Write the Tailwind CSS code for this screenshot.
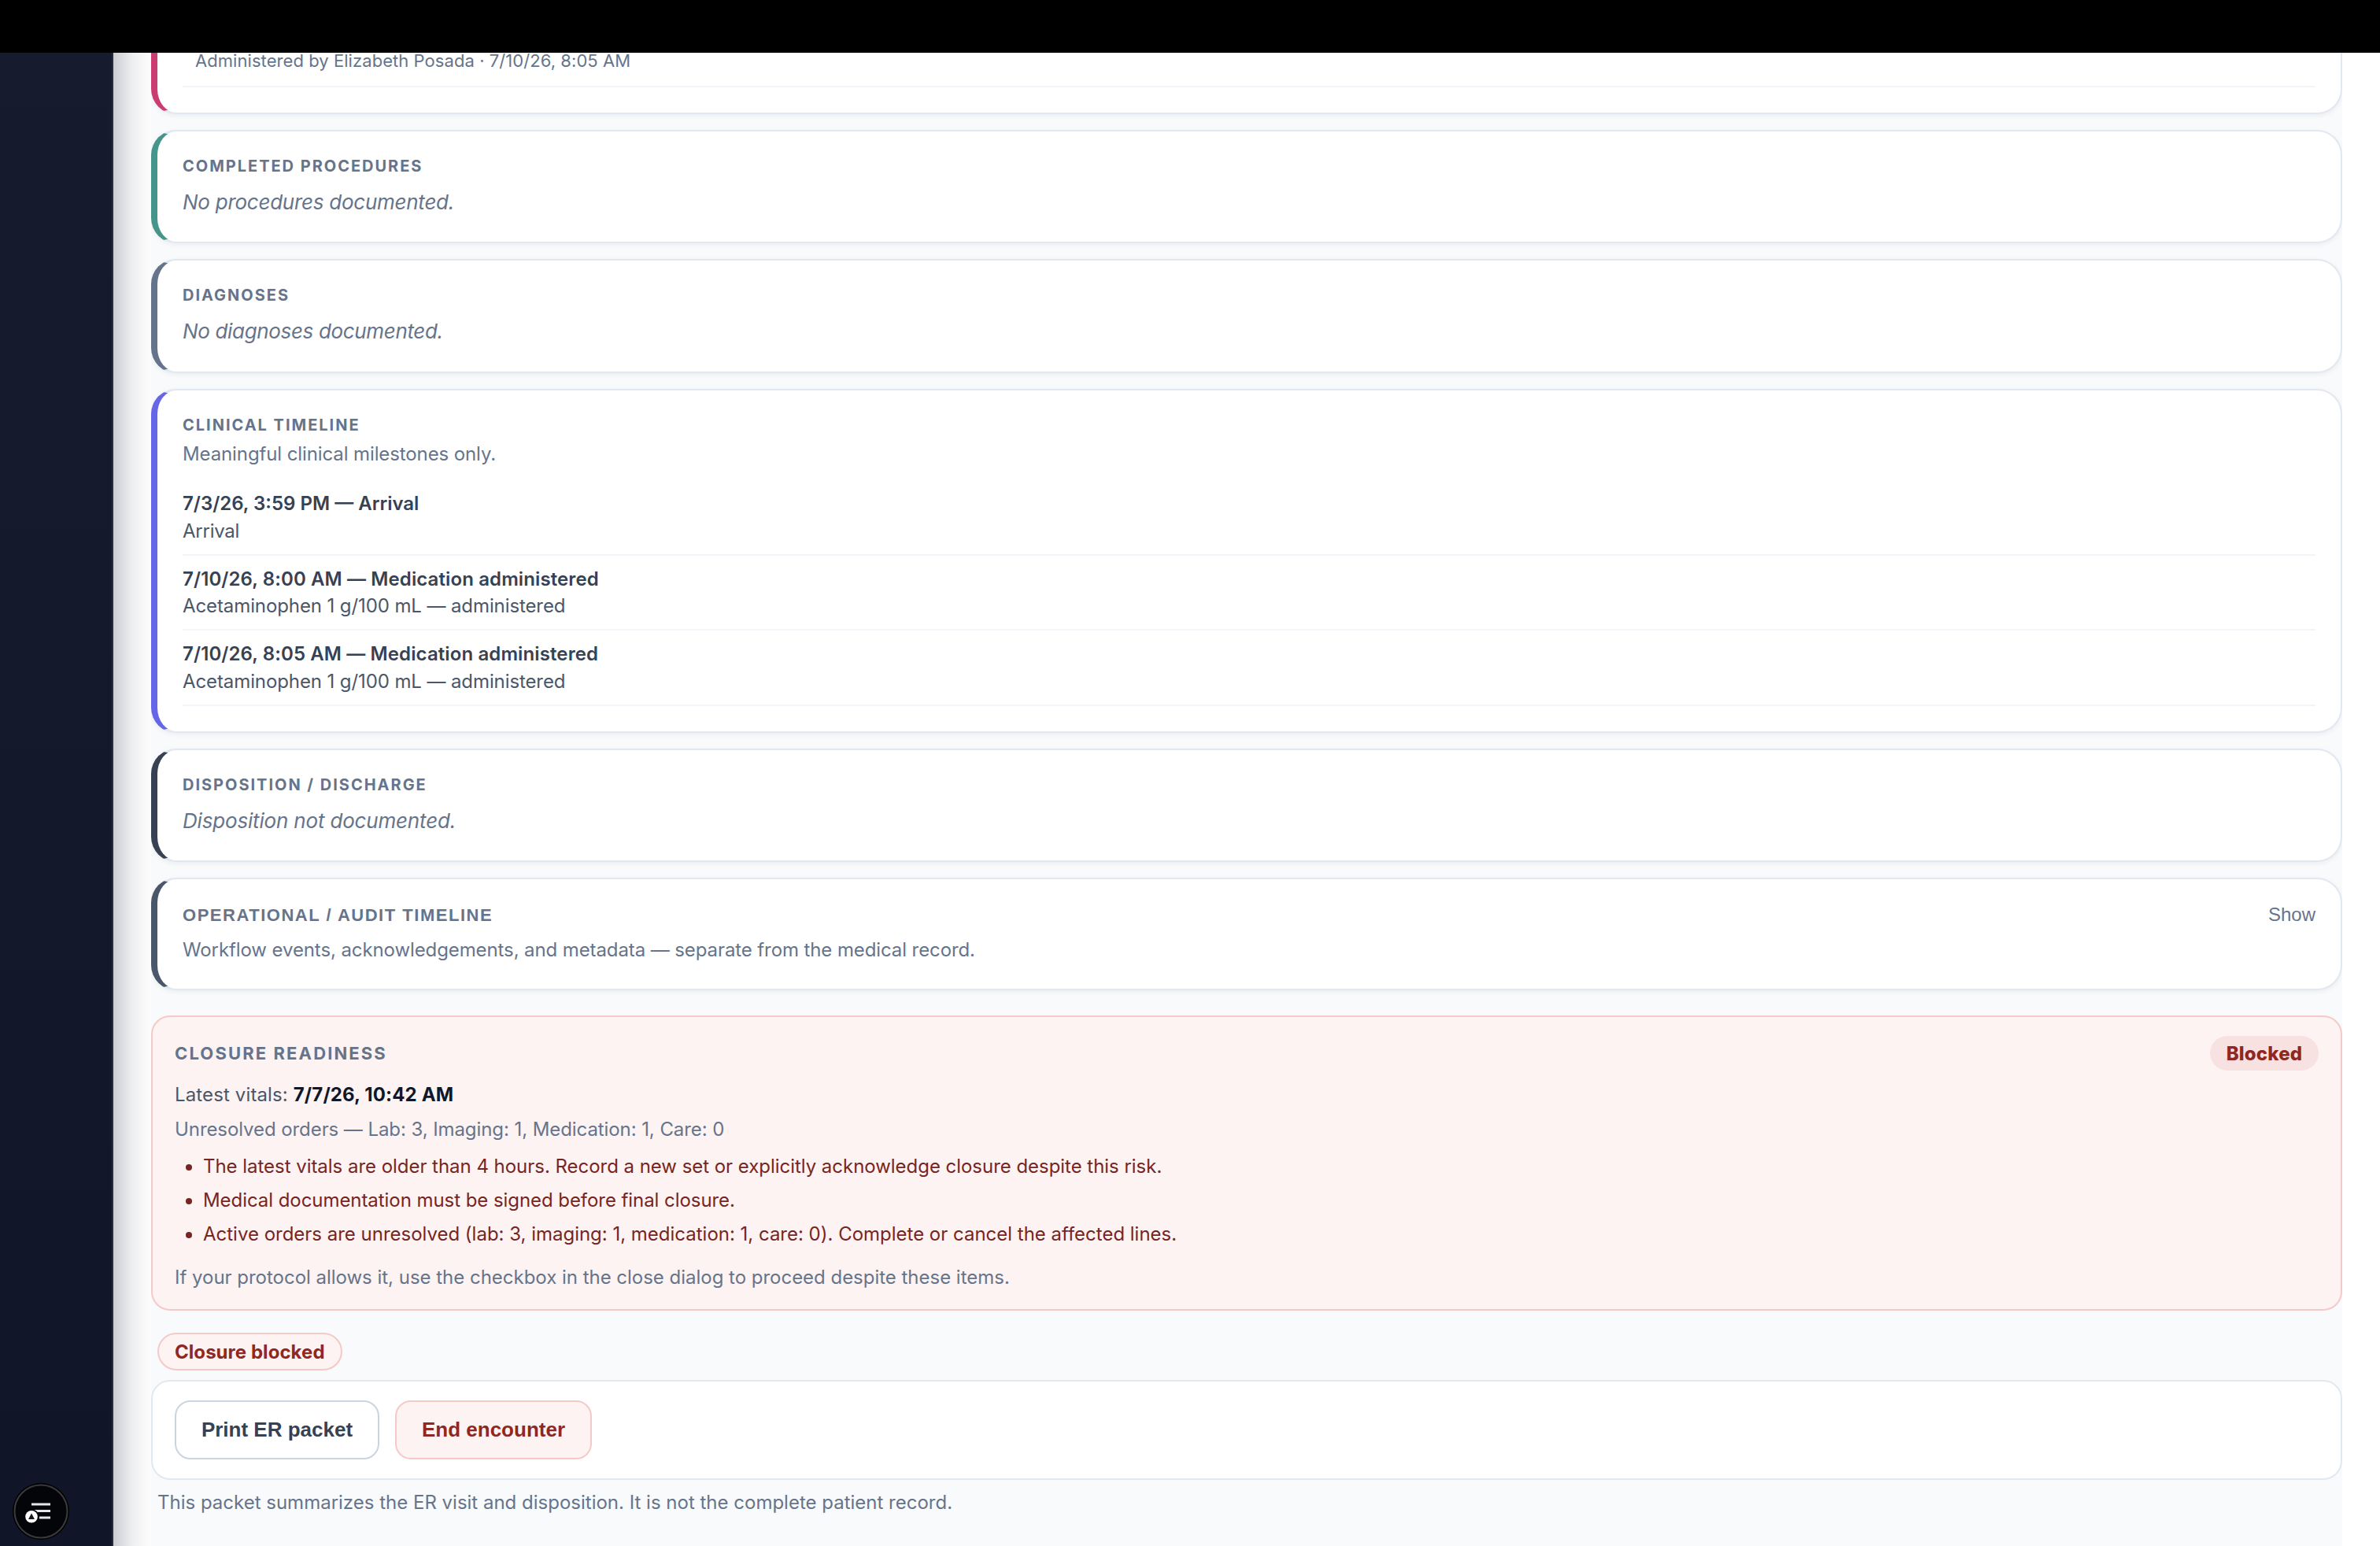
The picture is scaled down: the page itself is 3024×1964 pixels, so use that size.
<!DOCTYPE html>
<html lang="en">
<head>
<meta charset="utf-8">
<title>ER encounter summary</title>
<script src="https://cdn.jsdelivr.net/npm/@tailwindcss/browser@4"></script>
</head>
<body class="flex h-[1964px] w-[3024px] flex-col overflow-hidden bg-white font-['Inter',sans-serif]">
  <div class="h-[67px] shrink-0 bg-black"></div>
  <div class="flex min-h-0 flex-1">
    <!-- Sidebar -->
    <aside class="relative w-[144px] shrink-0 border-r-2 border-[#252c3d] bg-linear-to-b from-[#161c2d] to-[#101528]">
      <div class="absolute bottom-2 left-4 size-[72px]">
        <svg viewBox="0 0 72 72" class="size-full">
          <circle cx="36" cy="36" r="36" fill="#000"/>
          <circle cx="36" cy="36" r="33.5" fill="#040509" stroke="#3b3b3d" stroke-width="2"/>
          <path d="M24 27h24M28 35.4h20M34 44h14" stroke="#e4e7e6" stroke-width="3" fill="none"/>
          <circle cx="24" cy="42.8" r="9.6" fill="#040509"/>
          <circle cx="24" cy="42.8" r="7.8" fill="#fff"/>
          <path d="M24 38.6l4 7.4h-8z" fill="#15171c"/>
        </svg>
      </div>
    </aside>
    <div class="w-12 shrink-0 bg-linear-to-r from-[#cccdd2] via-[#eeeff0] to-[#fdfdfd]"></div>

    <main class="flex w-[2784px] shrink-0 flex-col overflow-hidden bg-[#f8fafc] text-2xl leading-[29px] text-[#66748b]">
      <section class="-mt-10 h-[118px] shrink-0 rounded-[32px] border-2 border-l-8 border-[#e2e8f0] border-l-[#cb3c73] bg-white px-8 pt-[38px] shadow-[0_2px_6px_rgba(15,23,42,0.06)]">
        <div class="border-b-2 border-[#f1f5f9] pb-[22px] pl-4 text-[22px] leading-5 tracking-[0.06px]">Administered by Elizabeth Posada · 7/10/26, 8:05 AM</div>
      </section>

      <section class="mt-5 h-36 shrink-0 rounded-[32px] border-2 border-l-8 border-[#e2e8f0] border-l-[#46958a] bg-white p-8 shadow-[0_2px_6px_rgba(15,23,42,0.06)]">
        <h2 class="text-xl leading-6 font-bold tracking-[1.98px]">COMPLETED PROCEDURES</h2>
        <p class="mt-[18px] text-[26px] leading-[31px] tracking-[-0.26px] italic">No procedures documented.</p>
      </section>

      <section class="mt-5 h-[145px] shrink-0 rounded-[32px] border-2 border-l-8 border-[#e2e8f0] border-l-[#66748b] bg-white p-8 shadow-[0_2px_6px_rgba(15,23,42,0.06)]">
        <h2 class="text-xl leading-6 font-bold tracking-[1.98px]">DIAGNOSES</h2>
        <p class="mt-[18px] text-[26px] leading-[31px] tracking-[-0.34px] italic">No diagnoses documented.</p>
      </section>

      <section class="mt-5 h-[437px] shrink-0 rounded-[32px] border-2 border-l-8 border-[#e2e8f0] border-l-[#6666e8] bg-white p-8 shadow-[0_2px_6px_rgba(15,23,42,0.06)]">
        <h2 class="text-xl leading-6 font-bold tracking-[1.98px]">CLINICAL TIMELINE</h2>
        <p class="mt-2.5 tracking-[-0.11px]">Meaningful clinical milestones only.</p>
        <ul class="mt-[34px] text-[#4a5669]">
          <li class="border-b-2 border-[#f1f5f9] pb-[15px]">
            <p class="font-semibold text-[#364154]">7/3/26, 3:59 PM — Arrival</p>
            <p class="mt-1.5 tracking-[-0.25px]">Arrival</p>
          </li>
          <li class="border-b-2 border-[#f1f5f9] py-[15px]">
            <p class="font-semibold tracking-[0.11px] text-[#364154]">7/10/26, 8:00 AM — Medication administered</p>
            <p class="mt-[5px] tracking-[-0.1px]">Acetaminophen 1 g/100 mL — administered</p>
          </li>
          <li class="border-b-2 border-[#f1f5f9] py-[15px]">
            <p class="font-semibold tracking-[0.11px] text-[#364154]">7/10/26, 8:05 AM — Medication administered</p>
            <p class="mt-1.5 tracking-[-0.1px]">Acetaminophen 1 g/100 mL — administered</p>
          </li>
        </ul>
      </section>

      <section class="mt-5 h-36 shrink-0 rounded-[32px] border-2 border-l-8 border-[#e2e8f0] border-l-[#364154] bg-white p-8 shadow-[0_2px_6px_rgba(15,23,42,0.06)]">
        <h2 class="text-xl leading-6 font-bold tracking-[1.98px]">DISPOSITION / DISCHARGE</h2>
        <p class="mt-[18px] text-[26px] leading-[31px] tracking-[-0.18px] italic">Disposition not documented.</p>
      </section>

      <section class="mt-5 h-[143px] shrink-0 rounded-[32px] border-2 border-l-8 border-[#e2e8f0] border-l-[#4a5669] bg-white px-8 pt-[31px] shadow-[0_2px_6px_rgba(15,23,42,0.06)]">
        <div class="flex items-baseline justify-between font-['Liberation_Sans',sans-serif]">
          <h2 class="text-[22px] leading-[25px] font-bold tracking-[1.52px]">OPERATIONAL / AUDIT TIMELINE</h2>
          <button class="text-2xl leading-[27px]">Show</button>
        </div>
        <p class="mt-[17px] tracking-[-0.1px]">Workflow events, acknowledgements, and metadata — separate from the medical record.</p>
      </section>

      <!-- Closure readiness -->
      <section class="mt-8 h-[375px] shrink-0 rounded-3xl border-2 border-[#f5c9c8] bg-[#fdf3f2] px-7 pt-6">
        <div class="flex items-center justify-between">
          <h2 class="text-[22px] leading-[26px] font-bold tracking-[2.12px]">CLOSURE READINESS</h2>
          <span class="h-11 w-[138px] rounded-full bg-[#f8e2e1] pt-2 text-center font-extrabold tracking-[0.2px] text-[#8f2722]">Blocked</span>
        </div>
        <p class="mt-4 tracking-[0.13px] text-[#4a5669]">Latest vitals: <strong class="font-bold text-[#0f172a]">7/7/26, 10:42 AM</strong></p>
        <p class="mt-[15px] tracking-[-0.08px]">Unresolved orders — Lab: 3, Imaging: 1, Medication: 1, Care: 0</p>
        <ul class="mt-[18px] flex flex-col gap-3.5 pl-3.5 text-[#772522]">
          <li class="flex gap-3.5 tracking-[-0.035px]"><span class="mt-3 size-2 rounded-full bg-[#772522]"></span>The latest vitals are older than 4 hours. Record a new set or explicitly acknowledge closure despite this risk.</li>
          <li class="flex gap-3.5 tracking-[-0.06px]"><span class="mt-3 size-2 rounded-full bg-[#772522]"></span>Medical documentation must be signed before final closure.</li>
          <li class="flex gap-3.5 tracking-[-0.01px]"><span class="mt-3 size-2 rounded-full bg-[#772522]"></span>Active orders are unresolved (lab: 3, imaging: 1, medication: 1, care: 0). Complete or cancel the affected lines.</li>
        </ul>
        <p class="mt-[26px] tracking-[-0.02px]">If your protocol allows it, use the checkbox in the close dialog to proceed despite these items.</p>
      </section>

      <span class="mt-7 ml-2 h-12 shrink-0 self-start rounded-full border-2 border-[#f5c9c8] bg-[#fdf3f2] px-5 pt-2 font-bold tracking-[0.05px] text-[#8f2722]">Closure blocked</span>

      <section class="mt-3 flex h-[127px] shrink-0 gap-5 rounded-3xl border-2 border-[#e2e8f0] bg-white px-7 pt-6 font-['Liberation_Sans',sans-serif] text-[26px] leading-[30px] font-bold">
        <button class="flex h-[75px] w-[260px] justify-center rounded-[20px] border-2 border-[#cbd5e1] bg-white pt-5 text-[#364154]">Print ER packet</button>
        <button class="flex h-[75px] w-[250px] justify-center rounded-[20px] border-2 border-[#f5c9c8] bg-[#fdf3f2] pt-5 text-[#8f2722]">End encounter</button>
      </section>
      <p class="mt-3.5 pl-2">This packet summarizes the ER visit and disposition. It is not the complete patient record.</p>
    </main>
    <div class="flex-1 bg-white"></div>
  </div>
</body>
</html>
